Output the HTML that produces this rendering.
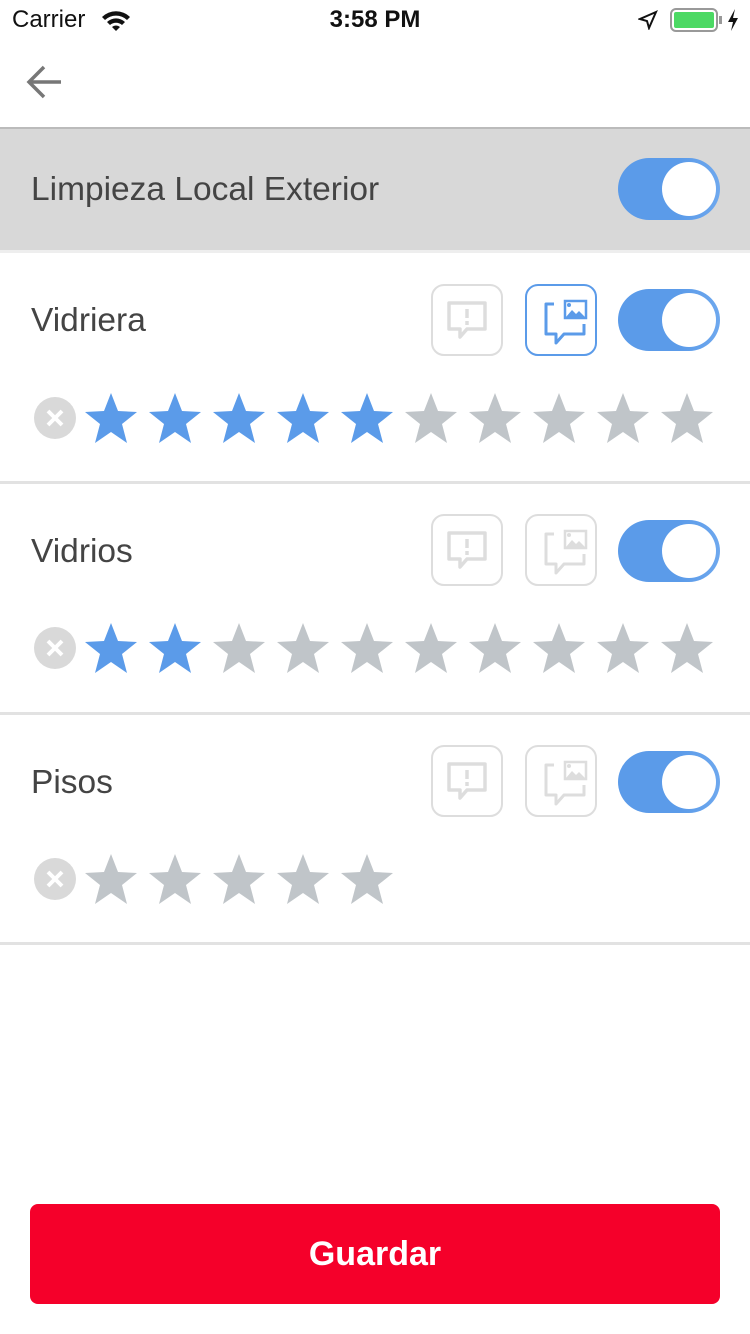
<!DOCTYPE html>
<html><head><meta charset="utf-8"><style>
*{margin:0;padding:0;box-sizing:border-box}
body{width:750px;height:1334px;background:#fff;font-family:"Liberation Sans",sans-serif;position:relative;overflow:hidden}
.a{position:absolute}
.lbl{font-size:33.5px;color:#444}
.box{position:absolute;width:72px;height:72px;border:2px solid #ddd;border-radius:13px}
.box svg{position:absolute;left:-2px;top:-2px}
.box.on{border-color:#5b9be9}
.tg{position:absolute;width:102px;height:62px;border-radius:31px;background:linear-gradient(90deg,#5b9be9 60%,#6ea8ee);}
.tg::after{content:"";position:absolute;right:4px;top:4px;width:54px;height:54px;border-radius:50%;background:#fff}
.div{position:absolute;left:0;width:750px;height:3px;background:#e2e2e2}
</style></head><body>
<div class="a" style="left:12px;top:6px;font-size:24px;color:#111">Carrier</div>
<svg class="a" style="left:100px;top:8px" width="32" height="24" viewBox="0 0 32 24"><path d="M2 9a20 20 0 0 1 28 0l-3 3a16 16 0 0 0-22 0z M7 14a13 13 0 0 1 18 0l-3 3a9 9 0 0 0-12 0z M12 19a6 6 0 0 1 8 0l-4 4z" fill="#111"/></svg>
<div class="a" style="left:0;width:750px;top:6px;text-align:center;font-size:24px;font-weight:bold;color:#111">3:58 PM</div>
<svg class="a" style="left:638px;top:10px" width="20" height="20" viewBox="0 0 20 20"><path d="M18 2L2 9l7 2 2 7z" fill="none" stroke="#111" stroke-width="2"/></svg>
<div class="a" style="left:670px;top:8px;width:48px;height:24px;border:2px solid #999;border-radius:6px"><div style="margin:2px;height:16px;background:#4cd964;border-radius:2px"></div></div>
<div class="a" style="left:719px;top:16px;width:3px;height:8px;background:#999"></div>
<svg class="a" style="left:726px;top:8px" width="14" height="24" viewBox="0 0 14 24"><path d="M9 1L2 14h5l-2 9 7-13H7z" fill="#111"/></svg>
<svg class="a" style="left:26px;top:64px" width="38" height="36" viewBox="0 0 38 36"><path d="M35 18H4M18 3L3 18l15 15" fill="none" stroke="#777" stroke-width="3.5"/></svg>
<div class="a" style="left:0;top:127px;width:750px;height:2px;background:#bbb"></div>
<div class="a" style="left:0;top:129px;width:750px;height:121px;background:#d8d8d8"></div>
<div class="a lbl" style="left:31px;top:171px">Limpieza Local Exterior</div>
<div class="tg" style="left:618px;top:158px"></div>
<div class="div" style="top:250px;background:#eee"></div>

<svg width="0" height="0" style="position:absolute"><defs>
<symbol id="st" viewBox="0 0 54 54"><polygon points="27,1 34,19 53,20 38,32 43,51 27,40 11,51 16,32 1,20 20,19"/></symbol>
<symbol id="cm" viewBox="0 0 72 72"><path d="M18 19h36v26H36l-7 8v-8H18z" fill="none" stroke="#ddd" stroke-width="3.5" stroke-linejoin="round"/><path d="M36 25v9M36 37v4" stroke="#ddd" stroke-width="3.5"/></symbol>
<symbol id="im" viewBox="0 0 72 72"><path d="M29 20h-8v30h10v9l8-9h20V40" fill="none" stroke="currentColor" stroke-width="3" stroke-linejoin="round"/><rect x="40" y="17" width="21" height="17" fill="none" stroke="currentColor" stroke-width="2.5"/><circle cx="44" cy="21" r="2" fill="currentColor"/><path d="M41 33l6-7 4 4 3-3 6 6z" fill="currentColor"/></symbol>
<symbol id="x" viewBox="0 0 42 42"><circle cx="21" cy="21" r="21" fill="#d9d9d9"/><path d="M14 14l14 14M28 14L14 28" stroke="#fff" stroke-width="4"/></symbol>
</defs></svg>

<div class="a lbl" style="left:31px;top:302px">Vidriera</div>
<div class="box" style="left:431px;top:284px"><svg width="72" height="72"><use href="#cm"/></svg></div>
<div class="box on" style="left:525px;top:284px;color:#5b9be9"><svg width="72" height="72"><use href="#im"/></svg></div>
<div class="tg" style="left:618px;top:289px"></div>
<svg class="a" style="left:34px;top:397px" width="42" height="42"><use href="#x"/></svg>
<div class="div" style="top:481px"></div>

<div class="a lbl" style="left:31px;top:533px">Vidrios</div>
<div class="box" style="left:431px;top:514px"><svg width="72" height="72"><use href="#cm"/></svg></div>
<div class="box" style="left:525px;top:514px;color:#ddd"><svg width="72" height="72"><use href="#im"/></svg></div>
<div class="tg" style="left:618px;top:520px"></div>
<svg class="a" style="left:34px;top:627px" width="42" height="42"><use href="#x"/></svg>
<div class="div" style="top:712px"></div>

<div class="a lbl" style="left:31px;top:764px">Pisos</div>
<div class="box" style="left:431px;top:745px"><svg width="72" height="72"><use href="#cm"/></svg></div>
<div class="box" style="left:525px;top:745px;color:#ddd"><svg width="72" height="72"><use href="#im"/></svg></div>
<div class="tg" style="left:618px;top:751px"></div>
<svg class="a" style="left:34px;top:858px" width="42" height="42"><use href="#x"/></svg>
<div class="div" style="top:942px"></div>

<svg class="a" style="left:0;top:0" width="750" height="1000">
<g fill="#5b9be9">
<use href="#st" x="84" y="392" width="54" height="54"/><use href="#st" x="148" y="392" width="54" height="54"/><use href="#st" x="212" y="392" width="54" height="54"/><use href="#st" x="276" y="392" width="54" height="54"/><use href="#st" x="340" y="392" width="54" height="54"/>
<use href="#st" x="84" y="622" width="54" height="54"/><use href="#st" x="148" y="622" width="54" height="54"/>
</g>
<g fill="#c0c5c9">
<use href="#st" x="404" y="392" width="54" height="54"/><use href="#st" x="468" y="392" width="54" height="54"/><use href="#st" x="532" y="392" width="54" height="54"/><use href="#st" x="596" y="392" width="54" height="54"/><use href="#st" x="660" y="392" width="54" height="54"/>
<use href="#st" x="212" y="622" width="54" height="54"/><use href="#st" x="276" y="622" width="54" height="54"/><use href="#st" x="340" y="622" width="54" height="54"/><use href="#st" x="404" y="622" width="54" height="54"/><use href="#st" x="468" y="622" width="54" height="54"/><use href="#st" x="532" y="622" width="54" height="54"/><use href="#st" x="596" y="622" width="54" height="54"/><use href="#st" x="660" y="622" width="54" height="54"/>
<use href="#st" x="84" y="853" width="54" height="54"/><use href="#st" x="148" y="853" width="54" height="54"/><use href="#st" x="212" y="853" width="54" height="54"/><use href="#st" x="276" y="853" width="54" height="54"/><use href="#st" x="340" y="853" width="54" height="54"/>
</g></svg>

<div class="a" style="left:30px;top:1204px;width:690px;height:100px;background:#f5002a;border-radius:8px;color:#fff;font-size:34px;font-weight:bold;text-align:center;line-height:100px">Guardar</div>
</body></html>
